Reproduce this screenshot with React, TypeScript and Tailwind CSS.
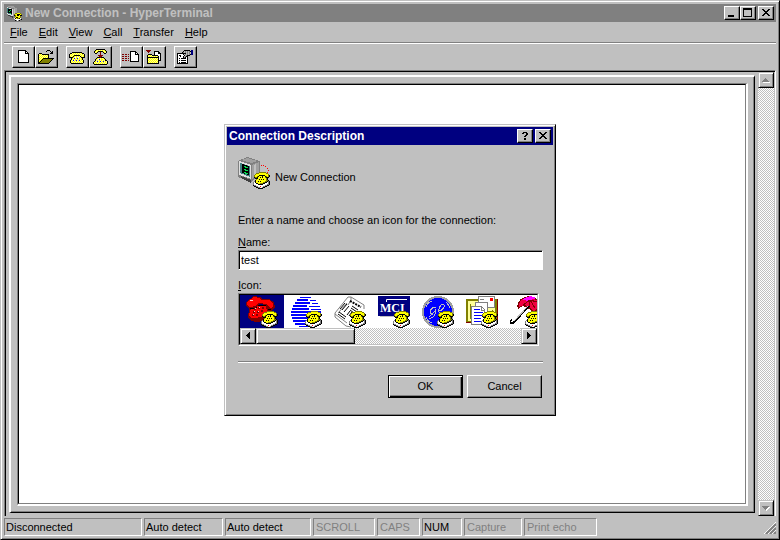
import { useState, type ReactNode } from "react";

const PALETTE: Record<string, string> = {
  k: "#000000",
  w: "#ffffff",
  g: "#808080",
  s: "#c0c0c0",
  y: "#ffff00",
  l: "#ffff99",
  d: "#808000",
  r: "#800000",
  R: "#ff0000",
  b: "#000080",
  B: "#0000ff",
  t: "#008080",
  G: "#00ff00",
};

/** Draws a bitmap from rows of palette letters, one letter per pixel. */
function Pixels({ rows, x = 0, y = 0 }: { rows: string[]; x?: number; y?: number }) {
  return (
    <g shapeRendering="crispEdges">
      {rows.flatMap((row, j) =>
        [...row].map((c, i) =>
          PALETTE[c] ? <rect key={`${i}-${j}`} x={x + i} y={y + j} width={1} height={1} fill={PALETTE[c]} /> : null
        )
      )}
    </g>
  );
}

const NEW_PAGE = [
  "kkkkkkkk...",
  "kwwwwwwkk..",
  "kwwwwwwkwk.",
  "kwwwwwwkkkk",
  "kwwwwwwwwwk",
  "kwwwwwwwwwk",
  "kwwwwwwwwwk",
  "kwwwwwwwwwk",
  "kwwwwwwwwwk",
  "kwwwwwwwwwk",
  "kwwwwwwwwwk",
  "kwwwwwwwwwk",
  "kkkkkkkkkkk",
];

const OPEN_FOLDER = [
  ".........kkk....",
  "........k...k.k.",
  ".............kk.",
  ".kkk........kkk.",
  "klylkkkkkkk.....",
  "kylylylylyk.....",
  "klylylylylk.....",
  "kylylylylyk.....",
  "klylykkkkkkkkkkk",
  "kylykdddddddddk.",
  "klykdddddddddk..",
  "kykdddddddddk...",
  "kkdddddddddk....",
  "kkkkkkkkkkk.....",
];

const PHONE = [
  "...kkkkkkkkkk...",
  ".kklylylylylykk.",
  "kylylylylylylylk",
  "klylykkkkkklylyk",
  "kylykylylylkylyk",
  "kkkkylwylwylkkkk",
  "..kylBlyBlylyk..",
  "..klylylylylyk..",
  ".kylBlyBlyBlylk.",
  ".klylylylylylyk.",
  ".kylylylylylylk.",
  "..kkkkkkkkkkkk..",
];

const PHONE_DOWN = [
  "...kkkkkkkkk...",
  "..kylylylylyk..",
  ".kylykkkkkylyk.",
  ".klyk..r..kylk.",
  "..kk...r...kk..",
  ".......r.......",
  ".....rrrrr.....",
  "......rrr......",
  "....kkkrkkk....",
  "...kylylylyk...",
  "..kylwBlyylyk..",
  "..klylylylylkk.",
  ".kylBlyBlyBlylk",
  "klylylylylylylk",
  "kylylylylylylyk",
  ".kkkkkkkkkkkkk.",
];

const SEND = [
  "........kkkkkk...",
  "........kwwwwkk..",
  "........kwwwwkwk.",
  "rr.rr.r.kwwwwkkkk",
  "........kwwwwwwwk",
  "rr.rr.r.kwwwwwwwk",
  "........kwwwwwwwk",
  "rr.rr.r.kwwwwwwwk",
  "........kwwwwwwwk",
  "rr.rr.r.kwwwwwwwk",
  "........kkkkkkkkk",
];

const RECEIVE = [
  "rrrrr..........",
  ".rrr....kkkkk..",
  "..r.....kwwwkk.",
  "........kwwwkkk",
  "..kkkk..kwwwwwk",
  ".kylylkkkkkkwwk",
  ".klylylylylykwk",
  ".kkkkkkkkkkkkwk",
  ".kylylylylylkwk",
  ".klylylylylykwk",
  ".kylylylylylkkk",
  ".klylylylylyk..",
  ".kylylylylylk..",
  ".kkkkkkkkkkkk..",
];

const PROPERTIES = [
  ".......kkkkkk.bb",
  "......ksgsgsgkbb",
  ".....kgsgsgsgsbb",
  "kkkkkkkkksgsgsbb",
  "kwwwwwksgsgsgkbb",
  "kwkkwwwksgkkk...",
  "kwwkwwksgkk.....",
  "kwwwwwkgkwk.....",
  "kwkwkkkkkwk.....",
  "kwwwwwwwwwk.....",
  "kwkwkkkkkwk.....",
  "kwwwwwwwwwk.....",
  "kwkwkkkkkwk.....",
  "kkkkkkkkkkk.....",
];

const SMALL_PHONE = [
  "......ddddddd....",
  "...dddyyyyyyydd..",
  "..dyyyyyyyyyyyyd.",
  ".dyyyykkkkkkyyydk",
  ".dyydkyyykyykdydk",
  ".kddkyykykyydkkk.",
  "..kkkyyyyyyyydk..",
  "...dyykykykyydk..",
  "..kyyyyyyyyyyddk.",
  ".gkyykykyyyyddkgk",
  "gwkyyyyyyyddkkwgk",
  "gwwkkyydddkkwwwgk",
  "gwwwwkkkkkwwwwggk",
  "kggwwwwwwwwwggkk.",
  ".kkggwwRwwggkk...",
  "...kkggwwgkk.....",
  ".....kkkkk.......",
];

function SmallPhone() {
  return <Pixels rows={SMALL_PHONE} x={15} y={15} />;
}

function TerminalArt() {
  return (
    <g shapeRendering="crispEdges">
      <polygon points="0,4 9,0 22,4 22,18 13,25 0,20" fill="#808080" />
      <polygon points="3,3 9,1 20,4 14,6" fill="#a0a0a0" />
      <polygon points="14,8 21,5 21,17 14,22" fill="#a0a0a0" />
      <polygon points="16,8 18,7 18,18 16,20" fill="#c0c0c0" />
      <polygon points="1,4 13,8 13,22 1,18" fill="#e0e0e0" />
      <polygon points="2,6 12,9 12,20 2,16" fill="#408080" />
      <polygon points="4,7 11,9 11,18 4,16" fill="#000" />
      <path d="M6 9h2v1h-2zM7 10h3v1h-3zM6 12h2v1h-2zM7 13h3v1h-3zM6 15h2v1h-2zM7 16h3v1h-3z" fill="#00e050" />
      <polygon points="3,19 13,23 13,26 3,21" fill="#404040" />
      <path d="M23 8h1v1h-1zM25 8h1v1h-1zM27 9h1v1h-1zM29 11h1v1h-1zM30 13h1v1h-1zM29 15h1v1h-1z" fill="#f00" />
      <SmallPhone />
    </g>
  );
}

function RedPhoneArt() {
  return (
    <g shapeRendering="crispEdges">
      <polygon points="6,9 21,9 25,16 23,24 11,26 5,25 2,21 3,14" fill="#800000" />
      <polygon points="7,10 19,9 22,16 20,21 5,22 3,20 4,15" fill="#f00" />
      <polygon points="0,6 8,0 14,1 16,3 23,3 28,6 29,12 25,15 22,13 20,9 13,8 10,12 4,13 0,10" fill="#800000" />
      <polygon points="1,6 8,1 13,2 15,4 23,4 27,7 27,11 24,12 21,8 12,7 9,10 4,11 1,9" fill="#f00" />
      <path d="M4 12h6v1h-6zM10 11h1v1h-1zM12 9h8v1h-8zM22 13h3v1h-3z" fill="#000" />
      <path d="M8 12h2v2h-2zM12 11h2v2h-2zM16 11h2v2h-2zM7 15h2v2h-2zM11 15h2v2h-2zM15 14h2v2h-2zM6 18h2v2h-2zM10 18h2v2h-2z" fill="#800000" />
      <path d="M9 12h1v1h-1zM13 11h1v1h-1zM8 15h1v1h-1zM12 15h1v1h-1zM7 18h1v1h-1zM4 4h3v1h-3z" fill="#ffc0c0" />
      <SmallPhone />
    </g>
  );
}

function GlobeArt() {
  return (
    <g shapeRendering="crispEdges">
      <path
        d="M10 1h11v1h-11zM7 3h11v2h-11zM20 4h6v1h-6zM5 6h15v2h-15zM22 7h6v1h-6zM3 9h14v2h-14zM19 10l11 0v1h-11zM2 12h17v2h-17zM21 13h10v1h-10zM1 15h30v2h-30zM1 18h30v2h-30zM2 21h28v2h-28zM3 24h26v2h-26zM5 27h21v2h-21zM9 30h13v1h-13z"
        fill="#00f"
      />
      <SmallPhone />
    </g>
  );
}

function NewspaperArt() {
  return (
    <g>
      <polygon points="0,17 13,1 17,1 30,9 31,13 17,31 11,30 0,21" fill="#fff" />
      <path d="M14 1L1 17v4l11 9 5 1M14 1l3 0 0 3M17 1l13 8v4M13 7L4 17M17 4l-3 5M1 18l12 9" fill="none" stroke="#808080" />
      <path d="M16 5l11 6" stroke="#000" strokeWidth="2" strokeDasharray="2 1" />
      <path d="M6 13l5-6M8 14l5-6M10 16l5-6M18 10l6 4M17 12l6 4M16 14l4 3M4 18l7 5M5 16l7 5M13 19l3-4M15 20l3-4" stroke="#000" />
      <SmallPhone />
    </g>
  );
}

function MciArt() {
  return (
    <g>
      <rect x="0" y="0" width="32" height="20" fill="#000080" />
      <path d="M2 20.500h30" stroke="#c0c0c0" />
      <path d="M8.500 6V3.500H29" fill="none" stroke="#fff" />
      <text x="2" y="16" fontSize="12" fill="#fff" className="font-['Liberation_Serif',serif] font-bold">MCI</text>
      <SmallPhone />
    </g>
  );
}

function GeArt() {
  return (
    <g shapeRendering="crispEdges">
      <circle cx="16" cy="16" r="16" fill="#a0a0a0" />
      <circle cx="16" cy="16" r="14" fill="#00f" />
      <path
        d="M14 12c-2-2-6 1-6 4s4 2 6-3c0 5-2 8-5 9s-3-2 2-4M17 15c4-1 6-4 5-6s-4 0-5 4 1 6 5 3M10 5c-3 1-5 3-6 6M24 6c2 2 3 4 4 6M4 21c1 3 3 5 6 6"
        fill="none"
        stroke="#c0c0c0"
      />
      <SmallPhone />
    </g>
  );
}

function MailArt() {
  return (
    <g shapeRendering="crispEdges">
      <rect x="0" y="3" width="32" height="24" fill="#800000" />
      <rect x="0" y="3" width="31" height="23" fill="#808000" />
      <rect x="2" y="5" width="27" height="20" fill="#ffff99" />
      <path d="M4 8h1v15h-1zM26 14h1v6h-1z" fill="#808000" />
      <rect x="12.500" y="0.500" width="16" height="11" fill="#fff" stroke="#808080" />
      <path d="M14 3h4v1h-4zM15 7h5v1h-5z" fill="#808080" />
      <path d="M24 2h3v3h-3z" fill="#f00" />
      <path d="M9.500 6.500h12v18h-12z" fill="#fff" stroke="#808080" />
      <path d="M5.500 10.500h10l3 3v15h-13z" fill="#fff" stroke="#808080" />
      <path d="M15 10v4h4" fill="none" stroke="#808080" />
      <path d="M8 13h6v1h-6zM8 16h9v1h-9zM8 19h8v1h-8zM8 22h7v1h-7zM8 25h8v1h-8z" fill="#00f" />
      <SmallPhone />
    </g>
  );
}

function UmbrellaArt() {
  return (
    <g shapeRendering="crispEdges">
      <path d="M8 13C5 6 12 0 20 0c8 1 12 7 12 15l-5-1-3 4-5-5-6-3z" fill="#800000" />
      <path d="M9 11C8 6 13 1 20 1c6 1 10 6 11 12l-4-1-3 4-4-5-6-2z" fill="#f00040" />
      <path d="M12 4c4-4 10-5 14-2l-7 3z" fill="#f0f" />
      <path d="M13 9l7-5 5 8M20 5l-1 6M20 4l7 2 4 6" fill="none" stroke="#800000" />
      <path d="M19 10L5 25c-2 3-5 3-5 0l2-1" fill="none" stroke="#000" strokeWidth="2" />
      <path d="M18 10L4 25" stroke="#c0c0c0" />
      <SmallPhone />
    </g>
  );
}

const CONNECTION_ICONS: { name: string; art: ReactNode }[] = [
  { name: "Telephone", art: <RedPhoneArt /> },
  { name: "Globe", art: <GlobeArt /> },
  { name: "Newspaper", art: <NewspaperArt /> },
  { name: "MCI", art: <MciArt /> },
  { name: "GE", art: <GeArt /> },
  { name: "Mail", art: <MailArt /> },
  { name: "Umbrella", art: <UmbrellaArt /> },
];

const TOOLBAR: { name: string; rows: string[]; x: number; y: number }[][] = [
  [
    { name: "New", rows: NEW_PAGE, x: 5, y: 3 },
    { name: "Open", rows: OPEN_FOLDER, x: 2, y: 3 },
  ],
  [
    { name: "Connect", rows: PHONE, x: 2, y: 5 },
    { name: "Disconnect", rows: PHONE_DOWN, x: 3, y: 2 },
  ],
  [
    { name: "Send", rows: SEND, x: 1, y: 4 },
    { name: "Receive", rows: RECEIVE, x: 2, y: 3 },
  ],
  [{ name: "Properties", rows: PROPERTIES, x: 2, y: 3 }],
];

const STATUS: { text: string; box: string; tone: string }[] = [
  { text: "Disconnected", box: "w-[138px] pl-px", tone: "text-black" },
  { text: "Auto detect", box: "w-[79px] pl-px", tone: "text-black" },
  { text: "Auto detect", box: "w-[86px] pl-px", tone: "text-black" },
  { text: "SCROLL", box: "w-[62px] pl-0.5", tone: "text-[#808080]" },
  { text: "CAPS", box: "w-[43px] pl-0.5", tone: "text-[#808080]" },
  { text: "NUM", box: "w-10 pl-px", tone: "text-black" },
  { text: "Capture", box: "w-[58px] pl-0.5", tone: "text-[#808080]" },
  { text: "Print echo", box: "w-[73px] pl-0.5", tone: "text-[#808080]" },
];

const RAISED = "border border-t-white border-l-white border-r-black border-b-black bg-[#c0c0c0] shadow-[inset_-1px_-1px_0_#808080]";
const SUNKEN = "border border-t-[#808080] border-l-[#808080] border-r-white border-b-white shadow-[inset_1px_1px_0_#000]";
const TRACK = "bg-[repeating-conic-gradient(#fff_0_25%,#c0c0c0_0_50%)] bg-[length:2px_2px]";

function CaptionButton({ label, children }: { label: string; children: ReactNode }) {
  return (
    <button aria-label={label} className={`h-3.5 w-4 ${RAISED}`}>
      <svg width="14" height="12" viewBox="0 0 14 12" shapeRendering="crispEdges">
        {children}
      </svg>
    </button>
  );
}

const CLOSE_GLYPH = ["kk....kk", ".kk..kk.", "..kkkk..", "...kk...", "..kkkk..", ".kk..kk.", "kk....kk"];
const HELP_GLYPH = [".kkkk.", "kk..kk", "....kk", "...kk.", "..kk..", "......", "..kk..", "..kk.."];

function ScrollButton({ label, d, disabled = false }: { label: string; d: string; disabled?: boolean }) {
  return (
    <button
      aria-label={label}
      disabled={disabled}
      className="size-4 shrink-0 border border-[#c0c0c0] border-r-black border-b-black bg-[#c0c0c0] shadow-[inset_1px_1px_0_#fff,inset_-1px_-1px_0_#808080]"
    >
      <svg width="14" height="14" viewBox="0 0 14 14" shapeRendering="crispEdges">
        {disabled && <path d={d} transform="translate(1 1)" fill="#fff" />}
        <path d={d} fill={disabled ? "#808080" : "#000"} />
      </svg>
    </button>
  );
}

function Dialog() {
  const [name, setName] = useState("test");
  const [selected, setSelected] = useState(0);
  return (
    <section
      role="dialog"
      aria-labelledby="dialog-title"
      className="w-[332px] border border-[#c0c0c0] border-r-black border-b-black bg-[#c0c0c0] p-0.5 shadow-[inset_1px_1px_0_#fff,inset_-1px_-1px_0_#808080]"
    >
      <header className="flex h-[18px] items-center bg-[#000080] pr-0.5 pl-0.5 text-white">
        <h2 id="dialog-title" className="flex-1 text-[12px] leading-4 font-bold">Connection Description</h2>
        <div className="flex gap-0.5">
          <CaptionButton label="Help"><Pixels rows={HELP_GLYPH} x={4} y={2} /></CaptionButton>
          <CaptionButton label="Close"><Pixels rows={CLOSE_GLYPH} x={3} y={2} /></CaptionButton>
        </div>
      </header>
      <div className="pt-3 pr-2.5 pb-[15px] pl-[11px]">
        <div className="flex items-center gap-[5px]">
          <svg width="32" height="32" viewBox="0 0 32 32"><TerminalArt /></svg>
          <span className="pt-2">New Connection</span>
        </div>
        <p className="mt-6">Enter a name and choose an icon for the connection:</p>
        <label htmlFor="connection-name" className="mt-2 block"><u>N</u>ame:</label>
        <input
          id="connection-name"
          value={name}
          onChange={(e) => setName(e.target.value)}
          className={`mt-px block h-5 w-full bg-white pl-0.5 outline-none ${SUNKEN}`}
        />
        <div id="icon-label" className="mt-2"><u>I</u>con:</div>
        <div className="mt-px mr-1 border border-t-[#808080] border-l-[#808080] border-r-white border-b-white">
          <div className="border border-t-black border-l-black border-r-[#c0c0c0] border-b-[#c0c0c0]">
            <div role="listbox" aria-labelledby="icon-label" className="flex overflow-hidden bg-white">
              {CONNECTION_ICONS.map((icon, i) => (
                <button
                  key={icon.name}
                  role="option"
                  aria-label={icon.name}
                  aria-selected={i === selected}
                  onClick={() => setSelected(i)}
                  className={`flex h-[33px] w-11 shrink-0 items-end justify-center ${i === selected ? "bg-[#000080]" : "bg-white"}`}
                >
                  <svg width="32" height="32" viewBox="0 0 32 32">{icon.art}</svg>
                </button>
              ))}
            </div>
            <div className={`flex h-4 ${TRACK}`}>
              <ScrollButton label="Scroll left" d="M8 3h1v7h-1zM7 4h1v5h-1zM6 5h1v3h-1zM5 6h1v1h-1z" />
              <div className="w-[99px] border border-[#c0c0c0] border-r-black border-b-black bg-[#c0c0c0] shadow-[inset_1px_1px_0_#fff,inset_-1px_-1px_0_#808080]" />
              <div className="flex-1" />
              <ScrollButton label="Scroll right" d="M5 3h1v7h-1zM6 4h1v5h-1zM7 5h1v3h-1zM8 6h1v1h-1z" />
            </div>
          </div>
        </div>
        <hr className="mt-[15px] h-0.5 border-t border-b border-t-[#808080] border-b-white" />
        <div className="mt-3 flex justify-end gap-1 pr-px">
          <button className="h-[23px] w-[75px] border border-black bg-[#c0c0c0] pb-0.5 shadow-[inset_1px_1px_0_#fff,inset_-1px_-1px_0_#000,inset_-2px_-2px_0_#808080]">OK</button>
          <button className={`h-[23px] w-[75px] pb-0.5 ${RAISED}`}>Cancel</button>
        </div>
      </div>
    </section>
  );
}

export default function App() {
  return (
    <main className="relative flex h-screen w-full flex-col border border-[#c0c0c0] border-r-black border-b-black bg-[#c0c0c0] p-[3px] font-['Liberation_Sans',Arial,sans-serif] text-[11px] leading-[14px] text-black shadow-[inset_1px_1px_0_#fff,inset_-1px_-1px_0_#808080]">
      <header className="flex h-[18px] shrink-0 items-center bg-[#808080] pr-0.5 pl-0.5 text-[#c0c0c0]">
        <svg width="16" height="16" viewBox="0 0 32 32" className="mr-[3px]"><TerminalArt /></svg>
        <h1 className="flex-1 text-[12px] leading-4 font-bold">New Connection - HyperTerminal</h1>
        <CaptionButton label="Minimize"><path d="M3 8h6v2h-6z" fill="#000" /></CaptionButton>
        <CaptionButton label="Maximize"><path d="M2 1h9v9h-9zM3 3v6h7v-6z" fillRule="evenodd" fill="#000" /></CaptionButton>
        <div className="w-0.5" />
        <CaptionButton label="Close"><Pixels rows={CLOSE_GLYPH} x={3} y={2} /></CaptionButton>
      </header>
      <nav className="flex h-5 shrink-0 items-center gap-[11px] pl-1.5">
        {["File", "Edit", "View", "Call", "Transfer", "Help"].map((item) => (
          <button key={item}><u>{item[0]}</u>{item.slice(1)}</button>
        ))}
      </nav>
      <div className="h-0.5 shrink-0 border-t border-b border-t-[#808080] border-b-white" />
      <div role="toolbar" aria-label="Toolbar" className="flex h-[26px] shrink-0 gap-2 pt-0.5 pl-2">
        {TOOLBAR.map((group, i) => (
          <div key={i} className="flex">
            {group.map((tool) => (
              <button key={tool.name} aria-label={tool.name} className={`h-[22px] w-[23px] ${RAISED}`}>
                <svg width="21" height="20" viewBox="0 0 21 20">
                  <Pixels rows={tool.rows} x={tool.x} y={tool.y} />
                </svg>
              </button>
            ))}
          </div>
        ))}
      </div>
      <div className="flex min-h-0 flex-1 border-t border-r border-l border-t-[#808080] border-r-white border-l-[#808080]">
        <div className="flex min-w-0 flex-1 border-t border-l border-black pr-px">
          <div className="m-[3px] flex flex-1 border-t-2 border-r border-b border-l-2 border-t-white border-r-black border-b-black border-l-white">
            <div className="flex flex-1 border-r border-b border-[#808080] pt-1.5 pr-[5px] pb-[5px] pl-1.5">
              <div className="flex flex-1 border-t border-r-2 border-b-2 border-l border-t-[#808080] border-r-white border-b-white border-l-[#808080]">
                <textarea
                  aria-label="Terminal"
                  readOnly
                  className="flex-1 resize-none border border-t-black border-r-[#808080] border-b-[#808080] border-l-black bg-white outline-none"
                />
              </div>
            </div>
          </div>
          <div className={`flex w-4 flex-col justify-between ${TRACK}`}>
            <ScrollButton label="Scroll up" disabled d="M6 5h1v1h-1zM5 6h3v1h-3zM4 7h5v1h-5zM3 8h7v1h-7z" />
            <ScrollButton label="Scroll down" disabled d="M3 5h7v1h-7zM4 6h5v1h-5zM5 7h3v1h-3zM6 8h1v1h-1z" />
          </div>
        </div>
      </div>
      <footer className="flex h-5 shrink-0 gap-0.5 pt-0.5">
        {STATUS.map((cell, i) => (
          <div
            key={i}
            className={`h-[18px] border border-t-[#808080] border-l-[#808080] border-r-white border-b-white leading-4 whitespace-nowrap ${cell.box} ${cell.tone}`}
          >
            {cell.text}
          </div>
        ))}
        <svg width="12" height="12" viewBox="0 0 12 12" className="mt-1 ml-auto">
          <path d="M0 12L12 0M4 12L12 4M8 12L12 8" stroke="#fff" />
          <path d="M2 12L12 2M6 12L12 6M10 12L12 10" stroke="#808080" strokeWidth="2" />
        </svg>
      </footer>
      <div className="absolute inset-0 -m-px flex items-center justify-center">
        <Dialog />
      </div>
    </main>
  );
}
